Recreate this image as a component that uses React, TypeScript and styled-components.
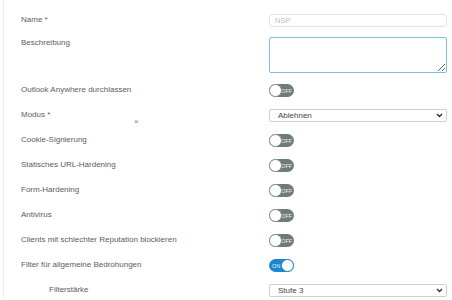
import React from "react";
import styled, { createGlobalStyle } from "styled-components";

const Global = createGlobalStyle`
  html, body { margin: 0; padding: 0; background: #fff; }
  body { font-family: "Liberation Sans", Arial, sans-serif; }
  * { box-sizing: border-box; }
`;

const Page = styled.div`
  position: relative;
  width: 449px;
  height: 300px;
  margin-left: 3px;
  border-left: 1px solid #ededed;
  padding: 14px 2px 0 17px;
  overflow: hidden;
`;

const Row = styled.div<{ $gap?: number }>`
  display: grid;
  grid-template-columns: 248px 178px;
  align-items: start;
  margin-bottom: ${(p) => (p.$gap ?? 12)}px;
`;

const Label = styled.div<{ $indent?: boolean }>`
  font-size: 8px;
  line-height: 9px;
  color: #5c5c5c;
  padding-left: ${(p) => (p.$indent ? 28 : 0)}px;
  padding-top: 1px;
  white-space: nowrap;
`;

const TextInput = styled.input`
  display: block;
  width: 178px;
  height: 13px;
  border: 1px solid #e3e3e3;
  border-radius: 3px;
  padding: 0 0 0 5px;
  font-family: inherit;
  font-size: 7.5px;
  color: #444;
  outline: none;
  &::placeholder { color: #bdbdbd; }
`;

const TextArea = styled.textarea`
  display: block;
  width: 178px;
  height: 36px;
  border: 1px solid #7fbde3;
  border-radius: 2px;
  padding: 2px;
  font-family: inherit;
  font-size: 8px;
  resize: both;
  outline: none;
`;

const SelectBox = styled.div`
  position: relative;
  width: 178px;
  height: 13px;
  border: 1px solid #cfcfcf;
  border-radius: 2px;
  display: flex;
  align-items: center;
  justify-content: space-between;
  padding: 0 3px 0 8px;
  font-size: 8px;
  color: #444;
`;

const Chevron = styled.svg`
  width: 7px;
  height: 5px;
`;

const Track = styled.div<{ $on?: boolean }>`
  position: relative;
  width: 25px;
  height: 13px;
  border-radius: 7px;
  background: ${(p) => (p.$on ? "#1b87cf" : "#6f7b7b")};
  display: flex;
  align-items: center;
  justify-content: ${(p) => (p.$on ? "flex-start" : "flex-end")};
  padding: 0 ${(p) => (p.$on ? "0 0 3px" : "2px 0 0")};
  font-size: 5.5px;
  color: #e8eeee;
  letter-spacing: -0.1px;
`;

const Knob = styled.div<{ $on?: boolean }>`
  position: absolute;
  top: 0;
  ${(p) => (p.$on ? "right: 0;" : "left: 0;")}
  width: 13px;
  height: 13px;
  border-radius: 50%;
  background: #fff;
  border: 1px solid ${(p) => (p.$on ? "#1b87cf" : "#8a9595")};
`;

const Mark = styled.span`
  position: absolute;
  left: 130px;
  top: 117px;
  font-size: 8px;
  color: #777;
`;

const Toggle = ({ on }: { on?: boolean }) => (
  <Track $on={on}>
    {on ? "ON" : "OFF"}
    <Knob $on={on} />
  </Track>
);

const Select = ({ value }: { value: string }) => (
  <SelectBox>
    <span>{value}</span>
    <Chevron viewBox="0 0 7 5">
      <path d="M1 1 L3.5 3.5 L6 1" fill="none" stroke="#333" strokeWidth="1.4" />
    </Chevron>
  </SelectBox>
);

export default function App() {
  return (
    <>
      <Global />
      <Page>
        <Row $gap={10}>
          <Label>Name *</Label>
          <TextInput placeholder="NSP" />
        </Row>
        <Row $gap={11}>
          <Label>Beschreibung</Label>
          <TextArea />
        </Row>
        <Row>
          <Label>Outlook Anywhere durchlassen</Label>
          <Toggle />
        </Row>
        <Row>
          <Label>Modus *</Label>
          <Select value="Ablehnen" />
        </Row>
        <Row>
          <Label>Cookie-Signierung</Label>
          <Toggle />
        </Row>
        <Row>
          <Label>Statisches URL-Hardening</Label>
          <Toggle />
        </Row>
        <Row>
          <Label>Form-Hardening</Label>
          <Toggle />
        </Row>
        <Row>
          <Label>Antivirus</Label>
          <Toggle />
        </Row>
        <Row>
          <Label>Clients mit schlechter Reputation blockieren</Label>
          <Toggle />
        </Row>
        <Row>
          <Label>Filter für allgemeine Bedrohungen</Label>
          <Toggle on />
        </Row>
        <Row>
          <Label $indent>Filterstärke</Label>
          <Select value="Stufe 3" />
        </Row>
        <Mark>×</Mark>
      </Page>
    </>
  );
}
